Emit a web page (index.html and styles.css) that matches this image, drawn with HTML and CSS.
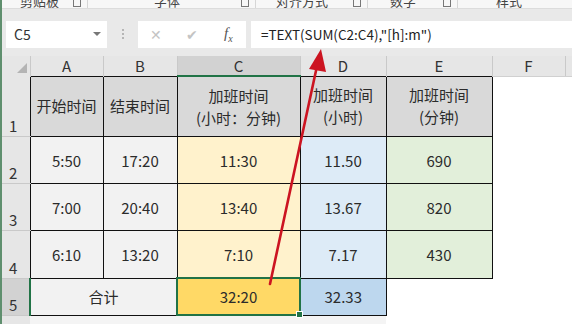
FILE: index.html
```html
<!DOCTYPE html>
<html>
<head>
  <title>加班时间</title>
  <link rel="stylesheet" href="styles.css">
</head>
<body>
  <div class="ribbon">
    <div class="group g1"><span class="label">剪贴板</span><span class="launch"></span></div>
    <div class="group g2"><span class="label">字体</span><span class="launch"></span></div>
    <div class="group g3"><span class="label">对齐方式</span><span class="launch"></span></div>
    <div class="group g4"><span class="label">数字</span><span class="launch"></span></div>
    <div class="group g5"><span class="label">样式</span></div>
  </div>

  <div class="fbar">
    <div class="namebox"><span>C5</span><span class="drop"></span></div>
    <div class="grip"><i></i><i></i><i></i></div>
    <div class="btns">
      <span class="btn">&#x2715;</span>
      <span class="btn">&#x2714;</span>
      <span class="fx">f<sub>x</sub></span>
    </div>
    <div class="formula">=TEXT(SUM(C2:C4),"[h]:m")</div>
  </div>

  <table class="sheet">
    <colgroup>
      <col class="w-rh"><col class="w-a"><col class="w-b"><col class="w-c">
      <col class="w-d"><col class="w-e"><col class="w-f"><col class="w-g">
    </colgroup>
    <tr class="hdr">
      <th class="corner"><span class="tri"></span></th>
      <th class="col">A</th><th class="col">B</th><th class="col on">C</th>
      <th class="col">D</th><th class="col">E</th><th class="col last">F</th><th class="col last"></th>
    </tr>
    <tr class="r1">
      <th class="rh">1</th>
      <td class="title">开始时间</td>
      <td class="title">结束时间</td>
      <td class="title">加班时间<br>(小时：分钟)</td>
      <td class="title">加班时间<br>(小时)</td>
      <td class="title">加班时间<br>(分钟)</td>
      <td class="blank"></td><td class="blank"></td>
    </tr>
    <tr class="rd">
      <th class="rh">2</th>
      <td class="gray">5:50</td><td class="gray">17:20</td>
      <td class="yellow">11:30</td><td class="blue">11.50</td><td class="green">690</td>
      <td class="blank"></td><td class="blank"></td>
    </tr>
    <tr class="rd">
      <th class="rh">3</th>
      <td class="gray">7:00</td><td class="gray">20:40</td>
      <td class="yellow">13:40</td><td class="blue">13.67</td><td class="green">820</td>
      <td class="blank"></td><td class="blank"></td>
    </tr>
    <tr class="rd">
      <th class="rh">4</th>
      <td class="gray">6:10</td><td class="gray">13:20</td>
      <td class="yellow">7:10</td><td class="blue">7.17</td><td class="green">430</td>
      <td class="blank"></td><td class="blank"></td>
    </tr>
    <tr class="r5">
      <th class="rh on">5</th>
      <td class="gray" colspan="2">合计</td>
      <td class="gold active">32:20</td>
      <td class="blue2">32.33</td>
      <td class="blank"></td><td class="blank"></td><td class="blank"></td>
    </tr>
    <tr class="r6">
      <th class="rh"></th>
      <td class="faint"></td><td class="faint"></td><td class="faint"></td><td class="faint"></td>
      <td class="blank"></td><td class="blank"></td><td class="blank"></td>
    </tr>
  </table>

  <svg class="arrow" width="572" height="324" viewBox="0 0 572 324">
    <line x1="270" y1="284" x2="317" y2="66" stroke="#cc1421" stroke-width="2.6" stroke-linecap="round"/>
    <polygon points="321,49 309,69 326,72" fill="#cc1421"/>
  </svg>
</body>
</html>
```

FILE: styles.css
```css
body {
  margin: 0;
  width: 572px;
  height: 324px;
  overflow: hidden;
  position: relative;
  background: #ffffff;
  border-left: 2px solid #5f8f6e;
  box-sizing: border-box;
  font-family: "Noto Sans CJK SC", "Noto Sans", sans-serif;
  color: #2b2b2b;
}

/* ribbon strip, only the bottom of the labels shows */
.ribbon {
  display: flex;
  height: 8px;
  overflow: hidden;
  background: #f7f7f7;
  border-bottom: 1px solid #dcdcdc;
}

.group {
  display: flex;
  justify-content: space-between;
  align-items: flex-end;
  border-right: 1px solid #d6d6d6;
  padding: 0 6px 0 18px;
  box-sizing: border-box;
  font-size: 13px;
  color: #444;
}

.label {
  line-height: 13px;
  margin-bottom: 1px;
}

.launch {
  width: 6px;
  height: 6px;
  border: 1px solid #777;
  margin-bottom: 1px;
}

.g1 { width: 86px; }
.g2 { width: 168px; padding-left: 66px; }
.g3 { width: 112px; padding-left: 20px; }
.g4 { width: 90px; padding-left: 22px; }
.g5 { flex: 1; border-right: none; padding-left: 38px; }

/* formula bar */
.fbar {
  display: flex;
  align-items: center;
  height: 47px;
  padding: 0 0 0 4px;
  background: #e9e9e9;
  box-sizing: border-box;
}

.namebox {
  display: flex;
  justify-content: space-between;
  align-items: center;
  width: 101px;
  height: 27px;
  margin-top: 3px;
  padding: 0 6px 0 8px;
  box-sizing: border-box;
  background: #ffffff;
  font-size: 14px;
  color: #333;
}

.drop {
  width: 0;
  height: 0;
  border-left: 4px solid transparent;
  border-right: 4px solid transparent;
  border-top: 4px solid #777;
}

.grip {
  display: flex;
  flex-direction: column;
  gap: 2px;
  margin: 3px 14px 0 15px;
}

.grip i {
  width: 2px;
  height: 2px;
  background: #b5b5b5;
}

.btns {
  display: flex;
  align-items: center;
  width: 108px;
  height: 27px;
  margin-top: 3px;
  padding: 0 10px 0 12px;
  box-sizing: border-box;
  background: #ffffff;
  gap: 22px;
}

.btn {
  font-size: 14px;
  color: #c4c4c4;
  width: 14px;
}

.fx {
  font-family: "Liberation Serif", serif;
  font-style: italic;
  font-size: 15px;
  color: #555;
  margin-left: 2px;
}

.fx sub {
  font-size: 10px;
}

.formula {
  flex: 1;
  height: 27px;
  margin: 3px 0 0 5px;
  padding-left: 10px;
  background: #ffffff;
  font-size: 13.5px;
  line-height: 26px;
  color: #222;
}

/* sheet grid */
.sheet {
  border-collapse: collapse;
  table-layout: fixed;
  width: 572px;
}

.w-rh { width: 28px; }
.w-a { width: 73px; }
.w-b { width: 74px; }
.w-c { width: 123px; }
.w-d { width: 86px; }
.w-e { width: 106px; }
.w-f { width: 73px; }
.w-g { width: 9px; }

th {
  font-weight: normal;
  font-size: 15px;
  color: #333;
  padding: 0;
}

.hdr th {
  height: 19px;
  background: #e6e6e6;
  border-right: 1px solid #c9c9c9;
  line-height: 19px;
}

.hdr .col.on {
  background: #d2d2d2;
  border-bottom: 2px solid #217346;
}

.hdr .last {
  border-bottom: 1px solid #d0d0d0;
}

.corner {
  position: relative;
}

.tri {
  position: absolute;
  right: 3px;
  bottom: 3px;
  width: 0;
  height: 0;
  border-left: 10px solid transparent;
  border-bottom: 10px solid #b4b4b4;
}

.rh {
  background: #e6e6e6;
  border-bottom: 1px solid #c9c9c9;
  text-align: left;
  vertical-align: bottom;
  padding: 0 0 0 7px;
  line-height: 20px;
}

.rh.on {
  background: #d2d2d2;
  border-right: 2px solid #217346;
}

td {
  border: 1px solid #111;
  text-align: center;
  vertical-align: middle;
  font-size: 15px;
  padding: 0;
}

.r1 td { height: 59px; line-height: 22px; }
.rd td { height: 46px; }
.r5 td { height: 35px; }
.r6 td { height: 10px; border: none; }

.title { background: #d9d9d9; }
.gray { background: #f2f2f2; }
.yellow { background: #fff2cc; }
.gold { background: #ffd966; }
.blue { background: #ddebf7; }
.blue2 { background: #bdd7ee; }
.green { background: #e2efda; }
.faint { background: #f4f4f4; }

.blank {
  border: none;
  background: #ffffff;
}

.active {
  position: relative;
  border: 2px solid #217346;
}

.active::after {
  content: "";
  position: absolute;
  right: -4px;
  bottom: -4px;
  width: 5px;
  height: 5px;
  background: #217346;
  border: 1px solid #ffffff;
}

.arrow {
  position: absolute;
  left: -2px;
  top: 0;
  pointer-events: none;
}
```
